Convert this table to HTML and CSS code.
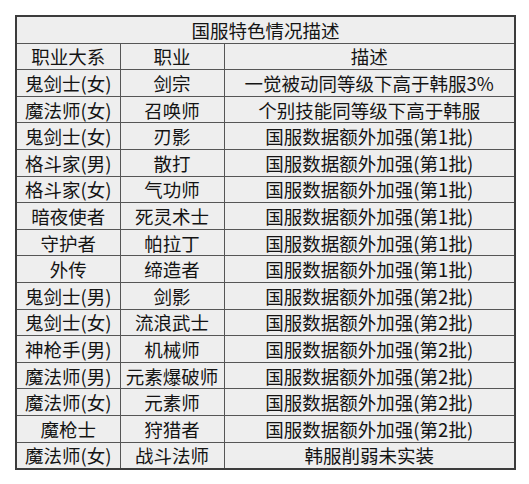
FILE: index.html
```html
<!DOCTYPE html>
<html lang="zh-CN">
<head>
<meta charset="utf-8">
<title>国服特色情况描述</title>
<link rel="stylesheet" href="styles.css">
</head>
<body>
<table class="spec">
  <colgroup>
    <col class="c1">
    <col class="c2">
    <col class="c3">
  </colgroup>
  <thead>
    <tr><th colspan="3" class="title">国服特色情况描述</th></tr>
    <tr><th>职业大系</th><th>职业</th><th>描述</th></tr>
  </thead>
  <tbody>
    <tr><td>鬼剑士(女)</td><td>剑宗</td><td>一觉被动同等级下高于韩服3%</td></tr>
    <tr><td>魔法师(女)</td><td>召唤师</td><td>个别技能同等级下高于韩服</td></tr>
    <tr><td>鬼剑士(女)</td><td>刃影</td><td>国服数据额外加强(第1批)</td></tr>
    <tr><td>格斗家(男)</td><td>散打</td><td>国服数据额外加强(第1批)</td></tr>
    <tr><td>格斗家(女)</td><td>气功师</td><td>国服数据额外加强(第1批)</td></tr>
    <tr><td>暗夜使者</td><td>死灵术士</td><td>国服数据额外加强(第1批)</td></tr>
    <tr><td>守护者</td><td>帕拉丁</td><td>国服数据额外加强(第1批)</td></tr>
    <tr><td>外传</td><td>缔造者</td><td>国服数据额外加强(第1批)</td></tr>
    <tr><td>鬼剑士(男)</td><td>剑影</td><td>国服数据额外加强(第2批)</td></tr>
    <tr><td>鬼剑士(女)</td><td>流浪武士</td><td>国服数据额外加强(第2批)</td></tr>
    <tr><td>神枪手(男)</td><td>机械师</td><td>国服数据额外加强(第2批)</td></tr>
    <tr><td>魔法师(男)</td><td>元素爆破师</td><td>国服数据额外加强(第2批)</td></tr>
    <tr><td>魔法师(女)</td><td>元素师</td><td>国服数据额外加强(第2批)</td></tr>
    <tr><td>魔枪士</td><td>狩猎者</td><td>国服数据额外加强(第2批)</td></tr>
    <tr><td>魔法师(女)</td><td>战斗法师</td><td>韩服削弱未实装</td></tr>
  </tbody>
</table>
</body>
</html>
```

FILE: styles.css
```css
html, body {
  margin: 0;
  background: #ffffff;
}

body {
  padding: 15px 0 0 15px;
  font-family: "Noto Sans CJK SC", "Noto Sans", sans-serif;
  font-size: 18.5px;
  color: #141414;
}

.spec {
  border-collapse: collapse;
  table-layout: fixed;
  width: 499px;
  border: 2px solid #3c3c3c;
  background: #eeeeee;
}

.c1 { width: 104px; }
.c2 { width: 104px; }
.c3 { width: 291px; }

.spec th,
.spec td {
  border: 1px solid #555555;
  height: 25.6px;
  padding: 0;
  text-align: center;
  vertical-align: middle;
  font-weight: normal;
  line-height: 20px;
  white-space: nowrap;
  overflow: hidden;
}
```
